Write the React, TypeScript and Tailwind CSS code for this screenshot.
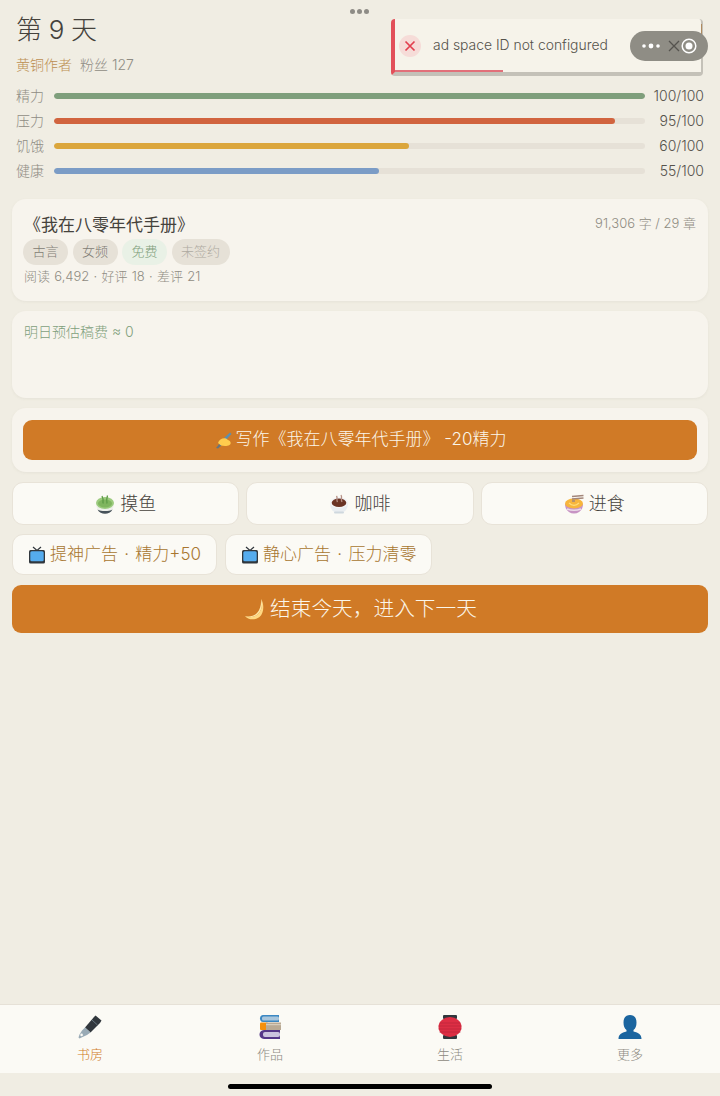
import React from "react";

function Pen() {
  return (
    <svg width="26" height="26" viewBox="0 0 26 26">
      <path d="M18.500 1.500 L24.500 6.500 L23 9 L13.500 18.500 L8 13.500 L17 3 Z" fill="#31373d" />
      <path d="M15 6 L20.500 11" stroke="#66757f" strokeWidth="1" />
      <path d="M8 13.500 L13.500 18.500 L10 21 L4.500 23.500 L2.500 24.500 L1.500 23.500 L2.500 20.500 L5 16.500 Z" fill="#99aab5" />
      <circle cx="4.600" cy="20.900" r="1.300" fill="#fbfaf5" />
    </svg>
  );
}

function Books() {
  return (
    <svg width="24" height="26" viewBox="0 0 24 26">
      <path d="M5 1 H21 V8 H5 C1 8 1 1 5 1 Z" fill="#3b88c3" />
      <rect x="4" y="2.500" width="17" height="4" rx="1.500" fill="#a9c6dc" />
      <rect x="2" y="8.500" width="8" height="7.500" rx="1" fill="#f4900c" />
      <rect x="8" y="8.500" width="15" height="7.500" fill="#b9aa94" />
      <rect x="8" y="10" width="15" height="1.200" fill="#d6cdbd" />
      <path d="M6 16 H22 V25 H6 C0 25 0 16 6 16 Z" fill="#553788" />
      <rect x="5" y="18" width="17" height="5" rx="2" fill="#cbc3de" />
    </svg>
  );
}

function Lantern() {
  return (
    <svg width="24" height="26" viewBox="0 0 24 26">
      <rect x="5" y="1" width="14" height="4" rx="1" fill="#31373d" />
      <rect x="5" y="21" width="14" height="4" rx="1" fill="#31373d" />
      <ellipse cx="12" cy="13" rx="11.500" ry="10" fill="#dd2e44" />
      <path d="M1.500 9h21M.6 12h22.800M.6 15h22.800M1.500 18h21" stroke="#b8243a" strokeWidth="0.700" />
    </svg>
  );
}

function Person() {
  return (
    <svg width="24" height="26" viewBox="0 0 24 26">
      <path d="M0.500 25 C0.500 20.500 3.500 18.500 8.500 17.500 L8.500 16 C6.500 14.500 5.500 12 5.500 8.500 C5.500 3.500 8 1 12 1 C16 1 18.500 3.500 18.500 8.500 C18.500 12 17.500 14.500 15.500 16 L15.500 17.500 C20.500 18.500 23.500 20.500 23.500 25 Z" fill="#1b659f" />
    </svg>
  );
}

function Writing() {
  return (
    <svg width="19" height="19" viewBox="0 0 19 19" className="shrink-0">
      <path d="M2 17 L6 12 L8 14 L4 17.500 Z" fill="#66757f" />
      <path d="M10 7 L16 1.500 L17.500 3 L12 9 Z" fill="#5b8fb0" />
      <path d="M4 12 C5 8.500 9 6.500 12 7.500 L14 9 C17 10 17.500 13 15.500 14 C13 15.500 9 15 7 14.500 Z" fill="#ffcc4d" />
    </svg>
  );
}

function Matcha() {
  return (
    <svg width="20" height="20" viewBox="0 0 20 20" className="shrink-0">
      <path d="M1 8 C1 14 3 19.500 10 19.500 C17 19.500 19 14 19 8 Z" fill="#eef0ea" />
      <path d="M2.500 15.500 C4 18.500 7 19.800 10 19.800 C13 19.800 16 18.500 17.500 15.500 C14 17.500 6 17.500 2.500 15.500 Z" fill="#47525a" />
      <ellipse cx="10" cy="9" rx="9" ry="6" fill="#9ccb7e" />
      <ellipse cx="10" cy="9.500" rx="7" ry="4" fill="#7fb55e" />
      <path d="M7 2 C8.500 4.500 8.500 7 8 9.500 M12.500 1.500 C11.500 4.500 11.500 7 12 9.500" stroke="#5c9a45" strokeWidth="1.300" fill="none" />
    </svg>
  );
}

function Coffee() {
  return (
    <svg width="20" height="20" viewBox="0 0 20 20" className="shrink-0">
      <path d="M1 8 C1 14 3 19 10 19 C17 19 19 14 19 8 Z" fill="#e9edf0" />
      <rect x="5" y="17.500" width="10" height="2" rx="1" fill="#cfd8de" />
      <ellipse cx="10" cy="8.500" rx="9" ry="5.500" fill="#f3f4f5" />
      <ellipse cx="10" cy="8.800" rx="7.300" ry="4.300" fill="#6a3324" />
      <path d="M7.500 2 C9 4 7 6 8.500 8 M12 1 C13.500 3.500 11.500 5.500 13 8" stroke="#b58f84" strokeWidth="1.300" fill="none" />
    </svg>
  );
}

function Noodles() {
  return (
    <svg width="20" height="20" viewBox="0 0 20 20" className="shrink-0">
      <path d="M1 10 C1 16 5 19.500 10 19.500 C15 19.500 19 16 19 10 Z" fill="#c793c4" />
      <path d="M3 15 C7 16.500 13 16.500 17 15" stroke="#eadbe8" strokeWidth="1.500" fill="none" />
      <ellipse cx="10" cy="9.500" rx="9" ry="5" fill="#f7b53c" />
      <path d="M8 2.500 L19.500 1.500 M8 5 L19.500 4 M8 7 L11 7" stroke="#a3867a" strokeWidth="1.300" />
      <path d="M5 9 C8 12 12 12 15 9" stroke="#ffdd7a" strokeWidth="1.300" fill="none" />
    </svg>
  );
}

function Tv() {
  return (
    <svg width="18" height="18" viewBox="0 0 18 18" className="shrink-0">
      <path d="M5 1 L9 4.500 L13 1" stroke="#31373d" strokeWidth="1.200" fill="none" />
      <rect x="1" y="4" width="16" height="13.500" rx="1.500" fill="#31373d" />
      <rect x="2.300" y="5.300" width="13.400" height="10" rx="1.500" fill="#55acee" />
    </svg>
  );
}

function Moon() {
  return (
    <svg width="22" height="22" viewBox="0 0 22 22" className="shrink-0">
      <path d="M18 1 C20 6 19 12 15 16 C11 19.500 6 20 2 18 C5 22 12 22.500 16.500 19 C21 15.500 21.500 6 18 1 Z" fill="#ffd983" />
      <path d="M18 1 C20 6 19 12 15 16 C11 19.500 6 20 2 18 C7 19 11 18 14 15 C17 12 18.500 6 18 1 Z" fill="#ffe8a8" />
    </svg>
  );
}

const stats = [
  { label: "精力", value: 100, color: "#7f9f7c" },
  { label: "压力", value: 95, color: "#d1643f" },
  { label: "饥饿", value: 60, color: "#dba63c" },
  { label: "健康", value: 55, color: "#7b9cc6" },
];

function Card({ className, children }: { className: string; children: React.ReactNode }) {
  return (
    <section className={`rounded-[14px] bg-[#f7f4ed] shadow-[0_1px_3px_rgba(120,110,90,0.08)] ${className}`}>
      {children}
    </section>
  );
}

function Tag({ children, className }: { children: React.ReactNode; className: string }) {
  return <span className={`flex h-[26px] items-center rounded-full px-[9.5px] text-[13px] font-light ${className}`}>{children}</span>;
}

function Action({ icon, label }: { icon: React.ReactNode; label: string }) {
  return (
    <button className="flex h-[43px] flex-1 items-center justify-center gap-[5px] rounded-[11px] border border-[#e8e3d8] bg-[#fbfaf5] text-[18px] font-light text-[#45423c]">
      {icon}
      {label}
    </button>
  );
}

function Ad({ label }: { label: string }) {
  return (
    <button className="flex h-[41px] items-center gap-[4px] whitespace-nowrap rounded-[11px] border border-[#e8e3d8] bg-[#fbfaf5] px-[15px] text-[17px] font-light [word-spacing:1.5px] text-[#a8762f]">
      <Tv />
      {label}
    </button>
  );
}

function NavItem({ icon, label, active }: { icon: React.ReactNode; label: string; active?: boolean }) {
  return (
    <div className="flex flex-1 flex-col items-center pt-[9px]">
      <div className="flex h-[26px] items-center justify-center">{icon}</div>
      <span className={`mt-[5px] text-[13px] leading-[19px] font-light ${active ? "text-[#d07a26]" : "text-[#8d8a82]"}`}>{label}</span>
    </div>
  );
}

export default function App() {
  return (
    <div
      className="relative flex h-[1096px] w-[720px] flex-col overflow-hidden bg-[#f0ede3] text-[#45423c]"
      style={{ fontFamily: 'Inter, "Noto Sans CJK SC", sans-serif' }}
    >
      <header className="px-4 pt-[12px]">
        <h1 className="text-[26px] leading-[36px] font-light tracking-[-0.3px] text-[#45423c]">第 9 天</h1>
        <div className="mt-[7px] flex items-center gap-[8px] text-[14px] leading-[20px] font-light">
          <span className="text-[#bc8f52]">黄铜作者</span>
          <span className="text-[#8f8c83]">粉丝 127</span>
        </div>
        <div className="mt-[8px] flex flex-col">
          {stats.map((s) => (
            <div key={s.label} className="flex h-[25px] items-center">
              <span className="w-[38px] shrink-0 text-[14px] font-light text-[#8f8c83]">{s.label}</span>
              <div className="h-[6px] w-[591px] shrink-0 overflow-hidden rounded-full bg-[#e6e1d7]">
                <div className="h-full rounded-full" style={{ width: `${s.value}%`, backgroundColor: s.color }} />
              </div>
              <span className="flex-1 text-right text-[14px] font-light whitespace-nowrap text-[#55524b]">{s.value}/100</span>
            </div>
          ))}
        </div>
      </header>

      <main className="flex flex-1 flex-col px-3 pt-[16px]">
        <Card className="h-[102px] px-3 pt-[14px]">
          <div className="flex items-start justify-between">
            <h2 className="text-[17px] leading-[24px] font-normal text-[#45423c]">《我在八零年代手册》</h2>
            <span className="text-[13px] leading-[20px] font-light text-[#8f8c83]">91,306 字 / 29 章</span>
          </div>
          <div className="mt-[2px] -ml-px flex gap-[4.5px]">
            <Tag className="bg-[#e6e1d7] text-[#7f7c74]">古言</Tag>
            <Tag className="bg-[#e6e1d7] text-[#7f7c74]">女频</Tag>
            <Tag className="bg-[#e9f1e6] text-[#7f9f7c]">免费</Tag>
            <Tag className="bg-[#e6e1d7] text-[#aeaaa1]">未签约</Tag>
          </div>
          <div className="mt-px text-[13px] leading-[20px] font-light [word-spacing:0.6px] text-[#8f8c83]">阅读 6,492 · 好评 18 · 差评 21</div>
        </Card>

        <Card className="mt-[10px] h-[87px] px-3 pt-[11px]">
          <div className="text-[14px] leading-[20px] font-light text-[#7f9f7c]">明日预估稿费 ≈ 0</div>
        </Card>

        <Card className="mt-[10px] h-[64px] px-[11px] pt-[12px]">
          <button className="flex h-[40px] w-full items-center justify-center gap-[3px] rounded-[9px] bg-[#d07a26] text-[17px] font-light text-[#fbf6ea]">
            <Writing />
            写作《我在八零年代手册》 -20精力
          </button>
        </Card>

        <div className="mt-[10px] flex gap-[7px]">
          <Action icon={<Matcha />} label="摸鱼" />
          <Action icon={<Coffee />} label="咖啡" />
          <Action icon={<Noodles />} label="进食" />
        </div>

        <div className="mt-[9px] flex gap-[8px]">
          <Ad label="提神广告 · 精力+50" />
          <Ad label="静心广告 · 压力清零" />
        </div>

        <button className="mt-[10px] flex h-[48px] w-full items-center justify-center gap-[5px] rounded-[9px] bg-[#d07a26] text-[20.700px] font-light text-[#fbf6ea]">
          <Moon />
          结束今天，进入下一天
        </button>
      </main>

      <nav className="flex h-[69px] shrink-0 border-t border-[#e6e1d7] bg-[#fbfaf5]">
        <NavItem icon={<Pen />} label="书房" active />
        <NavItem icon={<Books />} label="作品" />
        <NavItem icon={<Lantern />} label="生活" />
        <NavItem icon={<Person />} label="更多" />
      </nav>
      <div className="flex h-[23px] shrink-0 items-start justify-center pt-[11px]">
        <div className="h-[5px] w-[264px] rounded-full bg-black" />
      </div>

      <div className="absolute top-[9px] left-[350px] flex gap-[2px]">
        <span className="h-[5px] w-[5px] rounded-full bg-[#8e8c86]" />
        <span className="h-[5px] w-[5px] rounded-full bg-[#8e8c86]" />
        <span className="h-[5px] w-[5px] rounded-full bg-[#8e8c86]" />
      </div>

      <div className="absolute top-[19px] left-[391px] h-[57px] w-[312px] overflow-hidden rounded-[4px] border-r-2 border-b-[4px] border-l-[4px] border-r-[#c4c1b8] border-b-[#c4c1b8] border-l-[#e2505a] bg-[#f6f3ea]">
        <div className="flex h-full items-center pl-[4px]">
          <span className="flex h-[22px] w-[22px] items-center justify-center rounded-full bg-[#f6dcd8]">
            <svg width="12" height="12" viewBox="0 0 12 12">
              <path d="M1.500 1.500 L10.500 10.500 M10.500 1.500 L1.500 10.500" stroke="#e2404f" strokeWidth="1.700" />
            </svg>
          </span>
          <span className="ml-[12px] text-[13.900px] font-light whitespace-nowrap text-[#55524b]">ad space ID not configured</span>
        </div>
        <div className="absolute bottom-0 left-0 h-[2px] w-[108px] bg-[#e2707a]" />
      </div>

      <div className="absolute top-[24px] left-[701px] h-[12px] w-px bg-[#b08a5e]" />

      <div className="absolute top-[31px] left-[630px] flex h-[30px] w-[78px] items-center rounded-full bg-[#8f8d85]">
        <svg width="20" height="6" viewBox="0 0 20 6" className="ml-[11px]">
          <circle cx="3" cy="3" r="1.800" fill="#fff" />
          <circle cx="10" cy="3" r="2.400" fill="#fff" />
          <circle cx="17" cy="3" r="1.800" fill="#fff" />
        </svg>
        <svg width="12" height="12" viewBox="0 0 12 12" className="ml-[7px]">
          <path d="M1 1 L11 11 M11 1 L1 11" stroke="#55534e" strokeWidth="1.300" />
        </svg>
        <svg width="16" height="16" viewBox="0 0 16 16" className="ml-[1px]">
          <circle cx="8" cy="8" r="6.800" fill="none" stroke="#fff" strokeWidth="1.500" />
          <circle cx="8" cy="8" r="3.500" fill="#fff" />
        </svg>
      </div>
    </div>
  );
}
